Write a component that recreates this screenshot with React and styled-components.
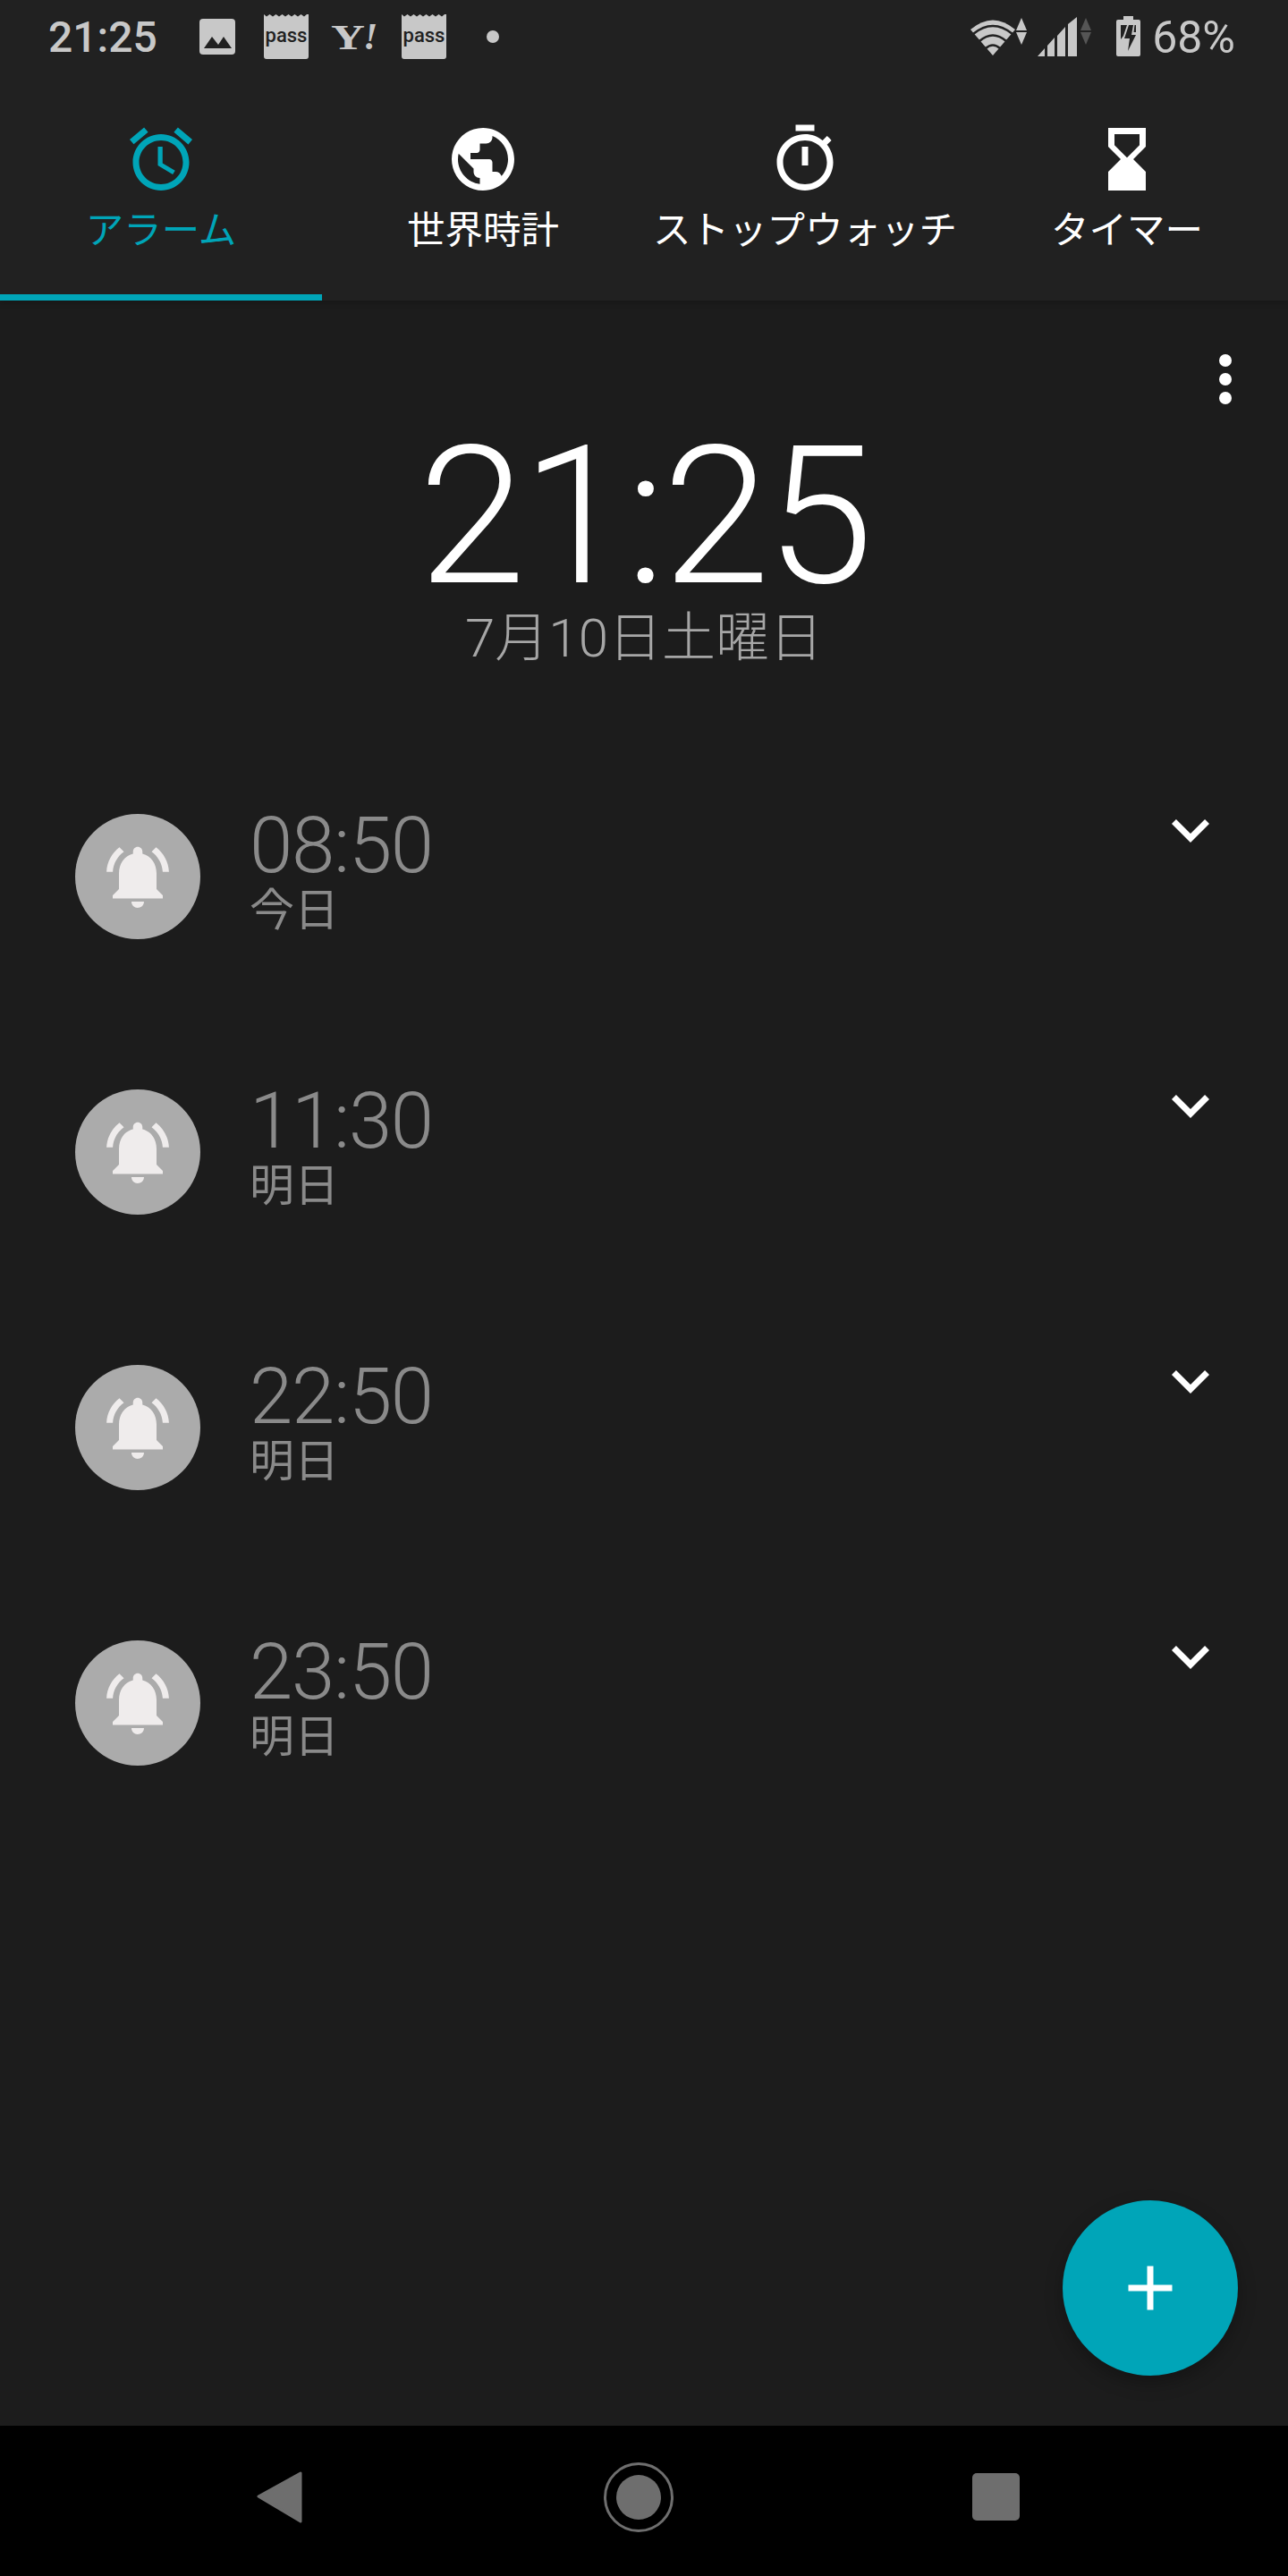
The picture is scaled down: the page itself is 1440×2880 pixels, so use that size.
import React from 'react';
import styled, { createGlobalStyle } from 'styled-components';

const GlobalStyle = createGlobalStyle`
    html, body {
        margin: 0;
        padding: 0;
        background: #1c1c1c;
    }
`

const CJK = `Roboto, "Noto Sans CJK JP", sans-serif`;
const TEAL = '#00a5b8';
const STATUS = '#c8c8c8';

const Screen = styled.div`
    width: 1440px;
    height: 2880px;
    display: flex;
    flex-direction: column;
    overflow: hidden;
    background: #1c1c1c;
    font-family: ${CJK};
`

const Header = styled.header`
    background: #212121;
    box-shadow: 0 3px 6px rgba(0, 0, 0, 0.18);
`

const StatusBar = styled.div`
    height: 88px;
    display: flex;
    align-items: flex-start;
    color: ${STATUS};
`

const StatusClock = styled.span`
    width: 204px;
    padding-left: 54px;
    box-sizing: border-box;
    font-size: 48px;
    font-weight: 500;
    line-height: 56px;
    margin-top: 14px;
`

const NotifySlot = styled.div`
    width: 77px;
    height: 82px;
    display: flex;
    align-items: center;
    justify-content: center;
`

const StatusRight = styled.div`
    margin-left: auto;
    display: flex;
    align-items: flex-start;
    padding: 18px 59px 0 0;
`

const Battery = styled.span`
    font-size: 50px;
    line-height: 56px;
    margin: -4px 0 0 13px;
`

const Signal = styled.svg`
    display: block;
    margin-left: ${p => p.$gap || 0}px;
    margin-top: ${p => p.$top || 0}px;
`

const Tabs = styled.nav`
    display: grid;
    grid-template-columns: repeat(4, 360px);
    height: 248px;
`

const Tab = styled.div`
    box-sizing: border-box;
    height: 248px;
    padding-top: 48px;
    display: flex;
    flex-direction: column;
    align-items: center;
    color: ${p => (p.$active ? TEAL : '#ffffff')};
    border-bottom: 7px solid ${p => (p.$active ? TEAL : 'transparent')};
`

const TabLabel = styled.span`
    margin-top: 14px;
    font-size: 42.5px;
    line-height: 48px;
    white-space: nowrap;
`

const Glyph = styled.svg`
    display: block;
    flex: none;
    fill: currentColor;
`

const Main = styled.main`
    flex: 1;
    position: relative;
`

const MenuRow = styled.div`
    display: flex;
    justify-content: flex-end;
    padding: 60px 63px 0 0;
`

const MenuDots = styled.div`
    display: flex;
    flex-direction: column;
    gap: 7px;
`

const MenuDot = styled.i`
    width: 14px;
    height: 14px;
    border-radius: 50%;
    background: #ffffff;
`

const ClockBlock = styled.section`
    display: flex;
    flex-direction: column;
    align-items: center;
    margin-top: 31px;
`

const BigClock = styled.div`
    font-size: 216px;
    font-weight: 300;
    letter-spacing: -4px;
    line-height: 190px;
    color: #ffffff;
`

const DateText = styled.div`
    margin-top: 6px;
    font-size: 60px;
    font-weight: 300;
    line-height: 70px;
    color: #a6a6a6;
`

const AlarmList = styled.ul`
    list-style: none;
    margin: 77px 0 0;
    padding: 0;
`

const AlarmRow = styled.li`
    height: 308px;
    padding: 0 67px 0 84px;
    display: flex;
    align-items: center;
`

const BellBadge = styled.div`
    width: 140px;
    height: 140px;
    border-radius: 50%;
    background: #ababab;
    color: #efecec;
    display: flex;
    align-items: center;
    justify-content: center;
`

const AlarmText = styled.div`
    margin: 0 0 4px 55px;
    color: #8a8a8a;
`

const AlarmTime = styled.div`
    font-size: 87px;
    font-weight: 300;
    letter-spacing: -1.3px;
    line-height: 80px;
`

const AlarmDay = styled.div`
    font-size: 50px;
    line-height: 66px;
`

const Chevron = styled(Glyph)`
    align-self: flex-start;
    margin: 60px 0 0 auto;
    color: #ffffff;
`

const Fab = styled.button`
    position: absolute;
    right: 56px;
    bottom: 56px;
    width: 196px;
    height: 196px;
    padding: 0;
    border: none;
    border-radius: 50%;
    background: ${TEAL};
    color: #ffffff;
    display: flex;
    align-items: center;
    justify-content: center;
    box-shadow: 0 8px 20px rgba(0, 0, 0, 0.28);
`

const NavBar = styled.footer`
    height: 168px;
    box-sizing: border-box;
    padding: 0 0 8px 114px;
    background: #000000;
    display: grid;
    grid-template-columns: repeat(3, 400px);
    align-items: center;
    justify-items: center;
    color: #6e6e6e;
`

const ICONS = {
    alarm: 'M22 5.72l-4.6-3.86-1.29 1.53 4.6 3.86L22 5.72zM7.88 3.39L6.6 1.86 2 5.71l1.29 1.53 4.59-3.85zM12.5 8H11v6l4.75 2.85.75-1.23-4-2.37V8zM12 4c-4.97 0-9 4.03-9 9s4.03 9 9 9 9-4.03 9-9-4.03-9-9-9zm0 16c-3.87 0-7-3.13-7-7s3.13-7 7-7 7 3.13 7 7-3.13 7-7 7z',
    globe: 'M12 2C6.48 2 2 6.48 2 12s4.48 10 10 10 10-4.48 10-10S17.52 2 12 2zm-1 17.93c-3.95-.49-7-3.85-7-7.93 0-.62.08-1.21.21-1.79L9 15v1c0 1.1.9 2 2 2v1.93zm6.9-2.54c-.26-.81-1-1.39-1.9-1.39h-1v-3c0-.55-.45-1-1-1H8v-2h2c.55 0 1-.45 1-1V7h2c1.1 0 2-.9 2-2v-.41c2.93 1.19 5 4.06 5 7.41 0 2.08-.8 3.97-2.1 5.39z',
    stopwatch: 'M15 1H9v2h6V1zm-4 13h2V8h-2v6zm8.03-6.61l1.42-1.42c-.43-.51-.9-.99-1.41-1.41l-1.42 1.42C16.07 4.74 14.12 4 12 4c-4.97 0-9 4.03-9 9s4.02 9 9 9 9-4.03 9-9c0-2.12-.74-4.07-1.97-5.61zM12 20c-3.87 0-7-3.13-7-7s3.13-7 7-7 7 3.13 7 7-3.13 7-7 7z',
    hourglass: 'M18 22l-.01-6L14 12l3.99-4.01L18 2H6v6l4 4-4 3.99V22h12zM8 7.5V4h8v3.5l-4 4-4-4z',
    bell: 'M7.58 4.08L6.15 2.65C3.75 4.48 2.17 7.3 2.03 10.5h2c.15-2.65 1.51-4.97 3.55-6.42zm12.39 6.42h2c-.15-3.2-1.73-6.02-4.12-7.85l-1.42 1.43c2.02 1.45 3.39 3.77 3.54 6.42zM18 11c0-3.07-1.64-5.64-4.5-6.32V4c0-.83-.67-1.5-1.5-1.5s-1.5.67-1.5 1.5v.68C7.63 5.36 6 7.92 6 11v5l-2 2v1h16v-1l-2-2v-5zm-6 11c.14 0 .27-.01.4-.04.65-.14 1.18-.58 1.44-1.18.1-.24.15-.5.15-.78h-4c.01 1.1.9 2 2.01 2z',
    chevron: 'M16.59 8.59L12 13.17 7.41 8.59 6 10l6 6 6-6z',
    plus: 'M19 13h-6v6h-2v-6H5v-2h6V5h2v6h6v2z',
};

function Icon({ name }) {
    return (
        <Glyph width={84} height={84} viewBox="0 0 24 24">
            <path d={ICONS[name]} />
        </Glyph>
    );
}

function PassIcon() {
    return (
        <svg width="50" height="50" viewBox="0 0 50 50">
            <path
                fill={STATUS}
                d="M0 0l3 2.5 3.5-2.5 3.5 2.5L13.5 0l3.5 2.5L20.5 0 24 2.5 27.5 0 31 2.5 34.5 0 38 2.5 41.5 0 45 2.5 48 0h2v47q0 3-3 3H3q-3 0-3-3z"
            />
            <text x="25" y="31" textAnchor="middle" fontFamily="Roboto, sans-serif" fontSize="22" fontWeight="500" fill="#212121">pass</text>
        </svg>
    );
}

function PictureIcon() {
    return (
        <svg width="40" height="40" viewBox="0 0 40 40">
            <rect width="40" height="40" rx="4" fill={STATUS} />
            <path fill="#212121" d="M5 33l9-13 7 9 6-9 9 13z" />
        </svg>
    );
}

function YahooIcon() {
    return (
        <svg width="54" height="50" viewBox="0 0 54 50">
            <text x="0" y="39" fontFamily="'Liberation Serif', serif" fontSize="41" fontWeight="700" textLength="38" lengthAdjust="spacingAndGlyphs" fill={STATUS}>Y</text>
            <text x="36" y="39" fontFamily="'Liberation Serif', serif" fontSize="42" fontWeight="700" fontStyle="italic" fill={STATUS}>!</text>
        </svg>
    );
}

function Dot() {
    return (
        <svg width="14" height="14" viewBox="0 0 14 14">
            <circle cx="7" cy="7" r="7" fill={STATUS} />
        </svg>
    );
}

function WifiIcon() {
    return (
        <Signal width="50" height="42" viewBox="0 0 50 42" $top={2}>
            <path fill={STATUS} d="M25 42L0 13Q25-8 50 13z" />
            <g fill="none" stroke="#212121" strokeWidth="2.6">
                <path d="M3 18Q25 0 47 18" />
                <path d="M10 26Q25 13 40 26" />
                <path d="M17 34Q25 27 33 34" />
            </g>
        </Signal>
    );
}

function ArrowPair({ color, gap }) {
    return (
        <Signal width="12" height="30" viewBox="0 0 12 30" $gap={gap} $top={2}>
            <path fill={color} d="M6 0l6 14H0z" />
            <path fill={color} d="M0 16h12L6 30z" />
        </Signal>
    );
}

function SignalBars() {
    return (
        <Signal width="44" height="44" viewBox="0 0 44 44" $gap={12} $top={1}>
            <path fill={STATUS} d="M0 44L8 35V44zM11 44V32L19 23V44zM22 44V21L31 11V44zM34 44V8L44 0V44z" />
        </Signal>
    );
}

function BatteryIcon() {
    return (
        <Signal width="27" height="45" viewBox="0 0 27 45" $gap={28}>
            <path fill={STATUS} d="M8 0h11v4h6q2 0 2 2v37q0 2-2 2H2q-2 0-2-2V6q0-2 2-2h6z" />
            <path fill="#212121" d="M5 10h7L8 22l-3 4zM20.5 10H22v8h-2.5zM14 10h5l-2 11h5l-9 18 2-14H9z" />
        </Signal>
    );
}

const TAB_ITEMS = [
    { icon: 'alarm', label: 'アラーム', active: true },
    { icon: 'globe', label: '世界時計' },
    { icon: 'stopwatch', label: 'ストップウォッチ' },
    { icon: 'hourglass', label: 'タイマー' },
];

const ALARMS = [
    { time: '08:50', day: '今日' },
    { time: '11:30', day: '明日' },
    { time: '22:50', day: '明日' },
    { time: '23:50', day: '明日' },
];

export default function App() {
    return (
        <Screen>
            <GlobalStyle />
            <Header>
                <StatusBar>
                    <StatusClock>21:25</StatusClock>
                    <NotifySlot><PictureIcon /></NotifySlot>
                    <NotifySlot><PassIcon /></NotifySlot>
                    <NotifySlot><YahooIcon /></NotifySlot>
                    <NotifySlot><PassIcon /></NotifySlot>
                    <NotifySlot><Dot /></NotifySlot>
                    <StatusRight>
                        <WifiIcon />
                        <ArrowPair color={STATUS} gap={1} />
                        <SignalBars />
                        <ArrowPair color="#555555" gap={4} />
                        <BatteryIcon />
                        <Battery>68%</Battery>
                    </StatusRight>
                </StatusBar>
                <Tabs>
                    {TAB_ITEMS.map(tab => (
                        <Tab key={tab.icon} $active={tab.active}>
                            <Icon name={tab.icon} />
                            <TabLabel>{tab.label}</TabLabel>
                        </Tab>
                    ))}
                </Tabs>
            </Header>
            <Main>
                <MenuRow>
                    <MenuDots>
                        <MenuDot />
                        <MenuDot />
                        <MenuDot />
                    </MenuDots>
                </MenuRow>
                <ClockBlock>
                    <BigClock>21:25</BigClock>
                    <DateText>7月10日土曜日</DateText>
                </ClockBlock>
                <AlarmList>
                    {ALARMS.map(alarm => (
                        <AlarmRow key={alarm.time}>
                            <BellBadge><Icon name="bell" /></BellBadge>
                            <AlarmText>
                                <AlarmTime>{alarm.time}</AlarmTime>
                                <AlarmDay>{alarm.day}</AlarmDay>
                            </AlarmText>
                            <Chevron width={84} height={84} viewBox="0 0 24 24">
                                <path d={ICONS.chevron} />
                            </Chevron>
                        </AlarmRow>
                    ))}
                </AlarmList>
                <Fab><Icon name="plus" /></Fab>
            </Main>
            <NavBar>
                <svg width="84" height="84" viewBox="0 0 84 84">
                    <path fill="currentColor" stroke="currentColor" strokeWidth="3" strokeLinejoin="round" d="M17 41L64 15V69z" />
                </svg>
                <svg width="84" height="84" viewBox="0 0 84 84">
                    <circle cx="42" cy="42" r="37.5" fill="none" stroke="currentColor" strokeWidth="3" />
                    <circle cx="42" cy="42" r="25" fill="currentColor" />
                </svg>
                <svg width="84" height="84" viewBox="0 0 84 84">
                    <rect x="15" y="15" width="53" height="53" rx="5" fill="currentColor" />
                </svg>
            </NavBar>
        </Screen>
    );
}
